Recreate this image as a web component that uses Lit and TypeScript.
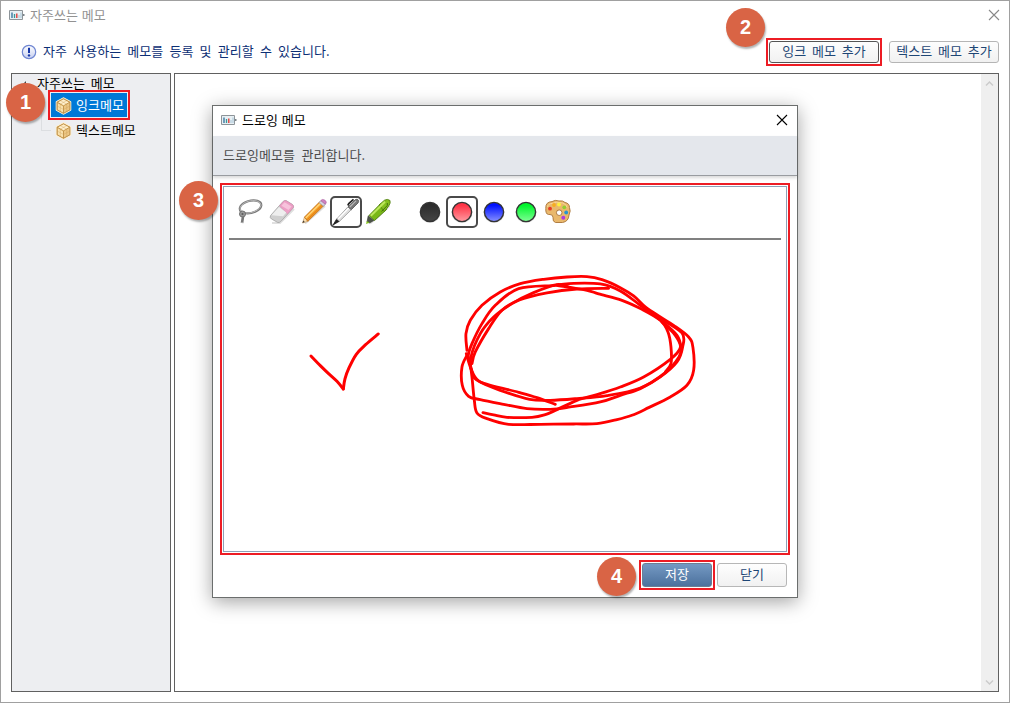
import { LitElement, html, svg, css } from 'lit';
import { customElement, property } from 'lit/decorators.js';
import { classMap } from 'lit/directives/class-map.js';

type Pt = [number, number];

/** Smooth curve through a list of pen samples. */
function smooth(p: Pt[]): string {
  let d = `M${p[0][0]} ${p[0][1]}`;
  for (let i = 0; i < p.length - 1; i++) {
    const a = p[i - 1] ?? p[i], b = p[i], c = p[i + 1], e = p[i + 2] ?? c;
    const f = (n: number) => n.toFixed(1);
    d += `C${f(b[0] + (c[0] - a[0]) / 6)} ${f(b[1] + (c[1] - a[1]) / 6)} ${f(c[0] - (e[0] - b[0]) / 6)} ${f(c[1] - (e[1] - b[1]) / 6)} ${c[0]} ${c[1]}`;
  }
  return d;
}

const LOOPS: Pt[][] = [
  [[80,270],[77,220],[90,180],[125,135],[180,95],[240,70],[310,57],[380,50],[440,49],[485,58],[540,82],[580,107],[615,140],[660,170],[700,195],[745,230],[758,262],[760,330],[740,375],[690,410],[625,442],[575,465],[530,478],[470,490],[400,491],[300,492],[205,492],[140,475],[110,458],[102,420],[95,350],[90,310]],
  [[90,310],[84,285],[95,250],[125,190],[165,135],[235,85],[345,75],[400,69],[480,71],[540,92],[600,135],[665,183],[710,225],[722,262],[716,290],[675,337],[600,383],[500,406],[410,415],[330,420],[268,417],[180,390],[115,362],[92,325],[78,280]],
  [[95,310],[105,275],[145,205],[185,150],[235,120],[320,98],[410,86],[505,84]],
  [[350,75],[440,90],[475,101],[545,120],[605,147],[660,180],[683,215],[692,260],[692,310],[675,335]],
  [[80,285],[65,320],[66,375],[85,408],[120,418],[190,432],[260,445],[330,447],[390,440],[480,425],[540,405],[600,385],[660,350],[710,305],[727,260],[725,218],[660,175]],
  [[128,457],[160,464],[200,471],[275,471],[315,463],[350,448],[410,420],[470,403],[540,380],[610,350],[690,297],[720,262],[705,225],[665,185]],
  [[345,432],[290,412],[235,396],[120,365],[95,335],[92,290],[120,220],[160,170],[215,130],[280,97],[350,73],[390,82]],
];
const CHECK: Pt[] = [[62,107],[90,136],[115,160],[140,183],[159,206]];
const CHECK_UP: Pt[] = [[159,206],[164,176],[176,143],[198,102],[225,74],[264,41]];

const appIcon = html`<svg class="app-icon" width="16" height="12" viewBox="0 0 16 12">
  <path d="M.5 1.500h13v9H.5z" fill="#e8f0f4" stroke="#8d9499"/>
  <path d="M14 5h1.500v2H14z" fill="#7c858b"/>
  <path d="M3 3.500V9" stroke="#3c77a0" stroke-width="1.400"/><path d="M5.500 5V9" stroke="#3b9698" stroke-width="1.300"/>
  <path d="M7.800 4.400V9" stroke="#e03e3a" stroke-width="1.400"/><path d="M10 6V9M12 3.500V9" stroke="#a7c4d6" stroke-width="1"/></svg>`;

const cubeIcon = html`<svg class="cube" width="17" height="18" viewBox="0 0 17 18">
  <path d="M8.500.7 15.800 4.600v8.700L8.500 17.300 1.200 13.300V4.600z" fill="#f6d391" stroke="#fff2d4" stroke-width="1"/>
  <path d="M8.500 1.800 14.900 5.200v7.600l-6.400 3.500-6.400-3.500V5.200z" fill="#ecc683" stroke="#b0823f" stroke-width=".8"/>
  <path d="M8.500 2.600 14 5.500 8.500 8.700 3 5.500z" fill="#fff0cd"/>
  <path d="M3 6.500 8 9.400v5.800l-5-2.800z" fill="#fae2ad"/>
  <path d="M2.200 5.200 8.500 8.800l6.300-3.600M8.500 8.800v7.300" fill="none" stroke="#bd8b40" stroke-width=".8"/>
  <path d="M5.300 3.600l6.400 3.500v7.100M11.700 3.600 5.300 7.100v7.100M2.200 9l6.300 3.500L14.800 9" fill="none" stroke="#c99a52" stroke-width=".5" opacity=".7"/></svg>`;

const closeIcon = html`<svg width="12" height="12" viewBox="0 0 12 12"><path d="M1 1l10 10M11 1 1 11" fill="none" stroke="currentColor" stroke-width="1.100"/></svg>`;

const TOOLS: Record<string, unknown> = {
  lasso: svg`
    <path d="M7.500 16.500C3.500 12 7 7.500 14 5.200C21 3.200 27.500 5 27.300 9.500C26.500 14.500 17.500 18.500 10 17" fill="none" stroke="#787878" stroke-width="2.200"/>
    <path d="M7.500 16C4 12 7.500 7.500 14 5.300C20.500 3.500 27 5 27 9.500C26 14 17.500 18 11 17" fill="none" stroke="#c6c6c6" stroke-width=".8"/>
    <circle cx="8.500" cy="18" r="3" fill="#9a9a9a" stroke="#707070"/><circle cx="8.500" cy="18" r="1.100" fill="#5e5e5e"/>
    <path d="M9 20.500 8 27" stroke="#777" stroke-width="2.600"/><path d="M7 26.500h2" stroke="#a8a8a8"/>`,
  eraser: svg`
    <path d="M6 27h8l14-14" fill="none" stroke="#e0e0e0" stroke-width="2"/>
    <path d="M4.600 19.500 17 5.500q1.300-1.200 3-1l6.500 4q1.800 1.500.7 3.500L14.800 25.500q-1.200 1.300-3 1L5.500 23Q3.300 21.500 4.600 19.500z" fill="#cfcfcf" stroke="#a2a2a2" stroke-width=".8"/>
    <path d="M13.500 10 17.500 5.500q1-1 2.500-.7l6.500 3.900q1.500 1.300.5 3L21.500 17.800z" fill="#eda0c6" stroke="#dc8ab4" stroke-width=".6"/>
    <path d="M15.500 9.800 18.500 6.200l7 4.300-3 3.500z" fill="#f7c3dc"/>
    <path d="M5.500 19.200 13 10.900l7.300 5.700-3.300 3.700z" fill="#eee"/>`,
  pencil: svg`
    <path d="M7 27.500 27 10" stroke="#ddd" stroke-width="2"/>
    <path d="M4.500 27 6.500 21 9.800 25.300z" fill="#f8dfaf" stroke="#bd8b51" stroke-width=".6"/>
    <path d="M4.500 27l.8-2.600 1.500 1.700z" fill="#3f3934"/>
    <path d="M6.500 21 22 5.500l4.200 3.700L9.800 25.300z" fill="#f59a23" stroke="#bd6b14" stroke-width=".8"/>
    <path d="M7.700 22 23 6.900" stroke="#ffd476" stroke-width="1.500"/><path d="M9.200 24 25 8.500" stroke="#d87710" stroke-width=".8"/>
    <path d="M21 6.500 23 4.500 27.300 8.400 25.200 10.300z" fill="#d3d3de" stroke="#88899b" stroke-width=".6"/>
    <path d="M22.700 4.500Q24.500 2.500 27 4.200T27.400 8.300z" fill="#cf82bf" stroke="#a75b9d" stroke-width=".6"/>`,
  pen: svg`
    <path d="M3 29 6.500 23.200 9.300 25.300z" fill="#222" stroke="#111" stroke-width=".7"/>
    <path d="M6.700 23 18 10.800l3.300 2.900L9.500 25.300z" fill="#dedede" stroke="#969696" stroke-width=".8"/>
    <path d="M8.300 22.800 19 11.700" stroke="#fff" stroke-width="1.300"/>
    <path d="M18 10.800 25.500 3.500q1.700-.8 2.700.5t-.2 3L21.300 13.700z" fill="#777" stroke="#505050" stroke-width=".8"/>
    <path d="M19.800 11 26 4.900" stroke="#b9b9b9" stroke-width="1.100"/>
    <path d="M17.800 9.500 18.800 7.500 23.500 3.300" fill="none" stroke="#222" stroke-width="1.700"/>`,
  marker: svg`
    <path d="M8 27.500 17 20l10.500-10" fill="none" stroke="#ddd" stroke-width="2"/>
    <path d="M5 26 6.200 19.800 11.800 24.500 7.500 27z" fill="#4d5448" stroke="#363b33" stroke-width=".6"/>
    <path d="M4 28 4.800 25 7.500 26.800z" fill="#85c51d"/>
    <path d="M7 19.500 18.500 7.800l6 5.700L12.500 24.500z" fill="#7ab817" stroke="#4d7d0f" stroke-width=".9"/>
    <path d="M17 9 22.500 4.200Q25.500 2.500 28 4.500 28.700 7 27 9.500L22.500 15.500z" fill="#84c01e" stroke="#50810e" stroke-width=".9"/>
    <path d="M8.800 19.800 23 5.800" stroke="#bde75c" stroke-width="2"/><path d="M19.500 15.500 25.300 9.500V7" fill="none" stroke="#446f10" stroke-width="1"/>`,
};

const PALETTE = svg`
  <path d="M3.800 12Q3.500 6 10 5.600 13 3.500 17 5q4-.7 6 1.500 4.500.8 4.500 5 1.500 3.500-.5 7.500-.4 6.500-6.500 7.500h-7q-3-.7-2.500-5 0-3-3-3H6.500q-3-.3-2.700-6.100z" fill="#e9b86c" stroke="#b07d42" stroke-width="1"/>
  <path d="M5.500 11q.5-3.500 5.500-3.700Q15 5.500 18 6.600q6 .3 7 5" fill="none" stroke="#f9d698" stroke-width="1"/>
  <circle cx="17.200" cy="16.700" r="2.800" fill="#fff" stroke="#ad7a42"/>
  <circle cx="8" cy="12.700" r="1.900" fill="#e63b24"/><circle cx="12" cy="9" r="1.900" fill="#f6ad20"/>
  <circle cx="17" cy="8.500" r="2" fill="#fff03b"/><circle cx="22.300" cy="11.300" r="1.900" fill="#91ce32"/>
  <circle cx="24.200" cy="16.500" r="1.900" fill="#2495d1"/><circle cx="21.300" cy="21.800" r="2" fill="#ad3be0"/>`;

@customElement('step-badge')
class StepBadge extends LitElement {
  @property() n = '';
  static styles = css`
    :host { display: flex; align-items: center; justify-content: center; width: 39px; height: 39px; border-radius: 50%;
      background: #d96445; color: #fff; font: bold 20px/1 "Liberation Sans", Arial, sans-serif; box-shadow: 1px 2px 2px rgba(0,0,0,.3); }
    span { display: block; margin-top: -2px; }
  `;
  render() { return html`<span>${this.n}</span>`; }
}

@customElement('draw-dialog')
class DrawDialog extends LitElement {
  static styles = css`
    :host { display: flex; flex-direction: column; box-sizing: border-box; background: #fff; border: 1px solid #6b6e6d;
      box-shadow: 0 4px 18px rgba(0,0,0,.36); }
    .title { display: flex; align-items: center; height: 30px; padding: 0 9px 0 8px; color: #000; flex: none; box-sizing: border-box; }
    .title .name { margin-left: 5px; flex: 1; word-spacing: 1px; line-height: 18px; margin-top: -3px; }
    .app-icon { display: block; margin-top: -2px; }
    .x { display: flex; margin-top: -2px; }
    .desc { height: 39px; flex: none; background: #e4e7ec; border-bottom: 1px solid #999ca0; padding: 0 0 2px 10px; box-sizing: content-box;
      height: 37px; display: flex; align-items: center; color: #4c4c4c; word-spacing: 3.500px; box-shadow: 0 2px 3px rgba(0,0,0,.15); letter-spacing: .05px; }
    .frame { margin: 7px 7px 0; border: 2px solid #ed1c24; padding: 1px; height: 366px; flex: none; }
    .board { border: 1px solid #8da0b7; height: 364px; display: flex; flex-direction: column; padding: 0 5px; }
    .tools { display: flex; height: 53px; padding: 9px 0 0 5px; box-sizing: border-box; border-bottom: 2px solid #808080; flex: none; }
    .tool { width: 32px; height: 32px; box-sizing: border-box; border-radius: 5px; display: flex; flex: none; }
    .tool svg { display: block; }
    .tool.on { border: 2px solid #4a4a4a; }
    .tool.on svg { margin: -2px; }
    .gap { width: 20px; flex: none; }
    .ink { display: block; margin: 0 -5px; }
    .foot { display: flex; justify-content: flex-end; align-items: flex-start; padding: 5px 10px 0; gap: 2px; }
    .mark { border: 2px solid #ed1c24; padding: 1px; }
    .btn { width: 70px; height: 24px; box-sizing: border-box; border: 1px solid #b7b7b7; border-radius: 3px; display: flex;
      align-items: center; justify-content: center; color: #1e4675; background: linear-gradient(#fefefe, #f1f1f1); padding-bottom: 2px; }
    .btn.close { margin-top: 3px; }
    .btn.save { color: #fff; border-color: #6d7e94; background: linear-gradient(#7499c3, #4c719d); }
  `;
  private dot(id: string, top: string, bottom: string) {
    return svg`<defs><linearGradient id=${id} x1="0" y1="0" x2="0" y2="1"><stop offset=".15" stop-color=${top}/><stop offset="1" stop-color=${bottom}/></linearGradient></defs>
      <circle cx="16" cy="16.500" r="10.500" fill="#000" opacity=".12"/>
      <circle cx="16" cy="16" r="9.600" fill="url(#${id})" stroke="#333" stroke-width="1.400"/>`;
  }
  private tool(content: unknown, on = false) {
    return html`<div class=${classMap({ tool: true, on })}><svg width="32" height="32" viewBox="0 0 32 32">${content}</svg></div>`;
  }
  render() {
    return html`
      <div class="title">${appIcon}<span class="name">드로잉 메모</span><span class="x">${closeIcon}</span></div>
      <div class="desc">드로잉메모를 관리합니다.</div>
      <div class="frame"><div class="board">
        <div class="tools">
          ${Object.keys(TOOLS).map(k => this.tool(TOOLS[k], k === 'pen'))}
          <span class="gap"></span>
          ${this.tool(this.dot('k', '#2d2d2d', '#454545'))}
          ${this.tool(this.dot('r', '#ff3446', '#ff9ca2'), true)}
          ${this.tool(this.dot('b', '#0011ff', '#8791ff'))}
          ${this.tool(this.dot('g', '#00f52c', '#80ff96'))}
          ${this.tool(PALETTE)}
        </div>
        <svg class="ink" width="562" height="310" viewBox="224 240 562 310" fill="none" stroke="#f00" stroke-linecap="round" stroke-linejoin="round">
          <g transform="translate(440.300 260.300) scale(.33333)" stroke-width="8.500">${LOOPS.map(l => svg`<path d=${smooth(l)}/>`)}</g>
          <g transform="translate(290.300 320.300) scale(.33333)" stroke-width="9"><path d=${smooth(CHECK)}/><path d=${smooth(CHECK_UP)}/></g>
        </svg>
      </div></div>
      <div class="foot"><div class="mark"><div class="btn save">저장</div></div><div class="btn close">닫기</div></div>`;
  }
}

@customElement('app-root')
class AppRoot extends LitElement {
  static styles = css`
    :host { display: block; width: 1010px; height: 703px; position: relative; overflow: hidden;
      font: 400 13px/18px "Noto Sans CJK KR", sans-serif; color: #000; white-space: nowrap; }
    .win { display: flex; flex-direction: column; width: 100%; height: 100%; box-sizing: border-box; border: 1px solid #a0a0a0; background: #fff; padding: 0 10px 10px; }
    .title { display: flex; align-items: center; height: 28px; margin: 0 -1px 0 -2px; color: #929292; flex: none; }
    .title .name { margin-left: 5px; flex: 1; word-spacing: 1px; }
    .x { display: flex; color: #888; }
    .bar { display: flex; align-items: center; height: 44px; flex: none; box-sizing: border-box; padding: 2px 0 0 10px; }
    .bar > svg { margin-top: -1px; }
    .bar .msg { flex: 1; margin: -2px 0 0 6px; color: #0c2f75; word-spacing: 3.200px; letter-spacing: .04px; }
    .mark { border: 2px solid #ed1c24; padding: 1px; margin-right: 7px; }
    .btn { width: 110px; height: 22px; box-sizing: border-box; border: 1px solid #b5b5b5; border-radius: 3px; display: flex;
      align-items: center; justify-content: center; color: #1e4675; background: linear-gradient(#fdfdfd, #f1f1f1); word-spacing: 3px; padding-bottom: 3px; }
    .btn.focus { border-color: #555; }
    .body { display: flex; gap: 3px; flex: 1; min-height: 0; }
    .tree { width: 160px; box-sizing: border-box; border: 1px solid #606060; background: #edeef1; display: flex; flex-direction: column; flex: none; }
    .root { height: 16px; padding: 1px 0 0 9px; display: flex; align-items: center; word-spacing: 3px; }
    .tri { width: 9px; height: 6px; margin-right: 7px; }
    .kids { display: flex; align-items: stretch; padding-left: 29px; }
    .lines { width: 10px; height: 40px; border-left: 1px solid #dcdee1; border-bottom: 1px solid #dcdee1; box-sizing: border-box; margin-right: -3px; }
    .items { display: flex; flex-direction: column; }
    .mark.sel { margin: -1px 0 0; width: 76px; }
    .item { display: flex; align-items: center; height: 24px; padding-left: 4px; box-sizing: border-box; gap: 4px; }
    .sel .item { background: #0078d7; color: #fff; }
    .plain { padding-left: 7px; margin-top: -2px; }
    .cube { display: block; flex: none; margin-top: 2px; }
    .item span { margin-top: -1px; }
    .view { flex: 1; border: 1px solid #606060; display: flex; justify-content: flex-end; }
    .scroll { width: 17px; background: #efefef; display: flex; flex-direction: column; justify-content: space-between; align-items: center; padding: 6px 0 5px; box-sizing: border-box; }
    draw-dialog { position: absolute; left: 212px; top: 105px; width: 586px; height: 493px; }
    step-badge { position: absolute; }
    .b1 { left: 6px; top: 83px; } .b2 { left: 726px; top: 8px; } .b3 { left: 179px; top: 181px; } .b4 { left: 597px; top: 557px; }
  `;
  render() {
    const chev = (d: string) => html`<svg width="9" height="7" viewBox="0 0 9 7"><path d=${d} fill="none" stroke="#cbcbcb" stroke-width="1.500"/></svg>`;
    return html`
      <div class="win">
        <div class="title">${appIcon}<span class="name">자주쓰는 메모</span><span class="x">${closeIcon}</span></div>
        <div class="bar">
          <svg width="16" height="16" viewBox="0 0 16 16"><defs><linearGradient id="i" x1="0" y1="0" x2="0" y2="1"><stop offset="0" stop-color="#fff"/><stop offset="1" stop-color="#c6cff0"/></linearGradient></defs>
            <circle cx="8" cy="8" r="6.700" fill="url(#i)" stroke="#6f86d2" stroke-width="1.200"/><path d="M8 3.800V9" stroke="#1637a8" stroke-width="2"/><circle cx="8" cy="11.400" r="1.200" fill="#1637a8"/></svg>
          <span class="msg">자주 사용하는 메모를 등록 및 관리할 수 있습니다.</span>
          <div class="mark"><div class="btn focus">잉크 메모 추가</div></div><div class="btn">텍스트 메모 추가</div>
        </div>
        <div class="body">
          <div class="tree">
            <div class="root"><svg class="tri" viewBox="0 0 9 6"><path d="M0 6 5 1v5z" fill="#444"/></svg>자주쓰는 메모</div>
            <div class="kids"><div class="lines"></div>
              <div class="items">
                <div class="mark sel"><div class="item">${cubeIcon}<span>잉크메모</span></div></div>
                <div class="item plain">${cubeIcon}<span>텍스트메모</span></div>
              </div></div>
          </div>
          <div class="view"><div class="scroll">${chev('M1 5.500 4.500 2 8 5.500')}${chev('M1 1.500 4.500 5 8 1.500')}</div></div>
        </div>
      </div>
      <draw-dialog></draw-dialog>
      <step-badge class="b1" n="1"></step-badge><step-badge class="b2" n="2"></step-badge>
      <step-badge class="b3" n="3"></step-badge><step-badge class="b4" n="4"></step-badge>`;
  }
}
